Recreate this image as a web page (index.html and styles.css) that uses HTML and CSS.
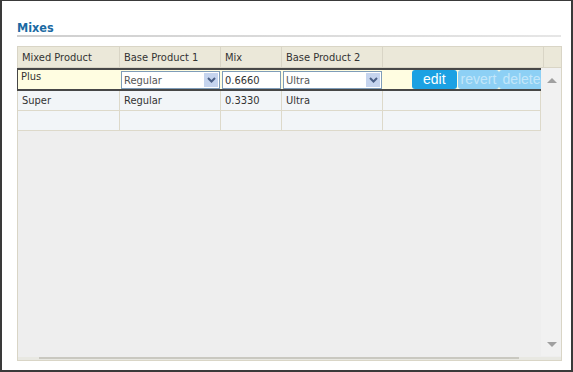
FILE: index.html
```html
<!DOCTYPE html>
<html lang="en">
<head>
    <meta charset="UTF-8">
    <title>Mixes</title>
    <link rel="stylesheet" href="styles.css">
</head>
<body>
    <div class="panel">
        <div class="title">Mixes</div>
        <div class="rule"></div>

        <div class="grid">
            <div class="grid-head">
                <div class="hcell">Mixed Product</div>
                <div class="hcell">Base Product 1</div>
                <div class="hcell">Mix</div>
                <div class="hcell">Base Product 2</div>
                <div class="hcell"></div>
                <div class="hcell last"></div>
            </div>

            <div class="grid-body">
                <div class="rows">
                    <div class="row editing">
                        <div class="cell">Plus</div>
                        <div class="cell">
                            <div class="select">
                                <span>Regular</span>
                                <span class="drop"><svg width="9" height="6" viewBox="0 0 9 6"><path d="M1 1 L4.5 4.5 L8 1" fill="none" stroke="#4a5f86" stroke-width="2"/></svg></span>
                            </div>
                        </div>
                        <div class="cell"><div class="input">0.6660</div></div>
                        <div class="cell">
                            <div class="select">
                                <span>Ultra</span>
                                <span class="drop"><svg width="9" height="6" viewBox="0 0 9 6"><path d="M1 1 L4.5 4.5 L8 1" fill="none" stroke="#4a5f86" stroke-width="2"/></svg></span>
                            </div>
                        </div>
                        <div class="cell actions">
                            <span class="btn">edit</span>
                            <span class="btn off">revert</span>
                            <span class="btn off">delete</span>
                        </div>
                    </div>
                    <div class="row">
                        <div class="cell">Super</div>
                        <div class="cell">Regular</div>
                        <div class="cell">0.3330</div>
                        <div class="cell">Ultra</div>
                        <div class="cell"></div>
                    </div>
                    <div class="row">
                        <div class="cell"></div>
                        <div class="cell"></div>
                        <div class="cell"></div>
                        <div class="cell"></div>
                        <div class="cell"></div>
                    </div>
                </div>
                <div class="vscroll">
                    <span class="arrow up"></span>
                    <span class="arrow down"></span>
                </div>
            </div>

            <div class="hscroll">
                <div class="thumb"></div>
            </div>
        </div>
    </div>
</body>
</html>
```

FILE: styles.css
```css
body {
    margin: 0;
    font-family: "DejaVu Sans Condensed", "DejaVu Sans", sans-serif;
    font-size: 11px;
    color: #333;
}

.panel {
    width: 573px;
    height: 372px;
    box-sizing: border-box;
    border: 2px solid #3a3a3a;
    border-top-width: 1px;
    background: #fff;
    padding: 13px 0 0 15px;
}

.title {
    font-weight: bold;
    font-size: 12.5px;
    color: #1b6aa3;
    height: 21px;
    line-height: 28px;
}

.rule {
    width: 544px;
    height: 2px;
    background: linear-gradient(to right, #cfcfcf, #e6e6e6);
}

.grid {
    width: 543px;
    margin-top: 9px;
    border: 1px solid #d9d5c6;
    background: #eeeeee;
}

.grid-head {
    display: grid;
    grid-template-columns: 102px 101px 61px 101px 161px 17px;
    height: 20px;
    background: #ebe8d9;
    border-bottom: 1px solid #d9d5c6;
}

.hcell {
    border-right: 1px solid #d9d5c6;
    padding: 0 4px;
    line-height: 21px;
    white-space: nowrap;
}

.hcell.last {
    border-right: none;
}

.grid-body {
    display: flex;
    height: 288px;
}

.rows {
    width: 523px;
}

.vscroll {
    flex: 1;
    background: #f1f1f1;
    display: flex;
    flex-direction: column;
    justify-content: space-between;
    align-items: center;
    padding: 10px 0 9px 2px;
}

.arrow {
    width: 0;
    height: 0;
    border-left: 5px solid transparent;
    border-right: 5px solid transparent;
}

.arrow.up {
    border-bottom: 5px solid #a0a0a0;
}

.arrow.down {
    border-top: 5px solid #a0a0a0;
}

.row {
    display: grid;
    grid-template-columns: 102px 101px 61px 101px 158px;
    height: 19px;
    background: #f2f5f8;
    border-bottom: 1px solid #ddd9ca;
}

.row.editing {
    height: 19px;
    background: #fffde1;
    border-top: 2px solid #474747;
    border-bottom: 2px solid #474747;
    border-left: 1px solid #474747;
    margin-left: -1px;
}

.cell {
    border-right: 1px solid #ddd9ca;
    padding: 0 4px;
    line-height: 19px;
    white-space: nowrap;
    overflow: hidden;
}

.editing .cell {
    border-right: none;
    padding: 0 1px;
    line-height: 14px;
}

.editing .cell:first-child {
    padding-left: 3px;
}

.select {
    display: flex;
    align-items: center;
    justify-content: space-between;
    height: 16px;
    margin-top: 1px;
    border: 1px solid #7f9db9;
    background: #fff;
    color: #555;
    padding-left: 2px;
    line-height: 16px;
}

.select span {
    padding-top: 1px;
}

.select .drop {
    width: 14px;
    height: 14px;
    margin-right: 1px;
    padding: 0;
    background: #c5d4ee;
    display: flex;
    align-items: center;
    justify-content: center;
}

.input {
    height: 16px;
    margin-top: 1px;
    border: 1px solid #7f9db9;
    background: #fff;
    padding-left: 2px;
    line-height: 17px;
}

.actions {
    display: flex;
    align-items: stretch;
    padding: 0 0 0 29px !important;
    margin-right: -3px;
}

.btn {
    font-family: "Liberation Sans", Arial, sans-serif;
    font-size: 14px;
    line-height: 19px;
    color: #fff;
    background: #1ba1e3;
    border-radius: 3px;
    padding: 0 11px;
    margin-right: 1px;
    flex-shrink: 0;
}

.btn.off {
    background: #8dd0f5;
    color: #c4e7fa;
    padding: 0 3px;
    margin-right: 0;
}

.hscroll {
    height: 3px;
    background: #e8e8e2;
    padding-left: 21px;
}

.thumb {
    width: 480px;
    height: 2px;
    margin-top: 1px;
    background: #c9c8c0;
}
```
